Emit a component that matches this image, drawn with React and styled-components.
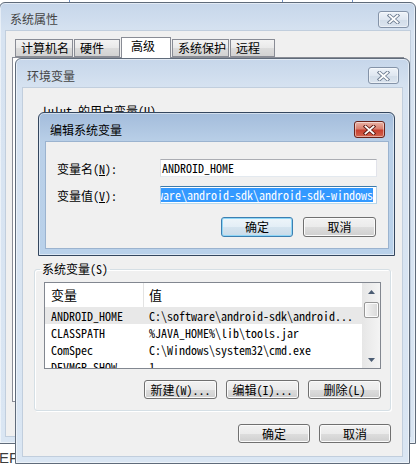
import React from "react";
import styled, { createGlobalStyle } from "styled-components";

const UI = `"Noto Sans Mono CJK SC", "Liberation Mono", "Noto Sans CJK SC", monospace`;
const TITLE = `"Noto Sans CJK SC", "Liberation Sans", sans-serif`;

const Global = createGlobalStyle`
  html, body { margin: 0; padding: 0; background: #fff; }
  body { font-family: ${UI}; font-size: 12px; color: #000; }
  * { box-sizing: border-box; }
`;

const Desktop = styled.div`
  position: relative;
  width: 418px;
  height: 465px;
  overflow: hidden;
  background: #fff;
`;

const BackStrip = styled.div`
  position: absolute;
  top: 0;
  left: 0;
  width: 418px;
  height: 3px;
`;

const Tick = styled.span`
  position: absolute;
  top: 0;
  left: ${(p) => p.$x}px;
  width: 1px;
  height: 3px;
  background: #6f8fc4;
`;

const Stray = styled.div`
  position: absolute;
  left: -1px;
  top: 449px;
  font: 15px "Liberation Sans", sans-serif;
  color: #3c3c3c;
`;

const Window = styled.div`
  position: absolute;
  left: ${(p) => p.$x}px;
  top: ${(p) => p.$y}px;
  width: ${(p) => p.$w}px;
  height: ${(p) => p.$h}px;
  display: flex;
  flex-direction: column;
  padding: 0 ${(p) => p.$pr ?? 7}px 7px ${(p) => p.$pl ?? 7}px;
  border: 1px solid ${(p) => (p.$active ? "#34465e" : "#5f6b7a")};
  border-radius: 6px 6px 0 0;
  background: ${(p) =>
    p.$active
      ? "linear-gradient(#a3bcdb, #bad0e8 30px, #b9d1ea)"
      : "linear-gradient(#c6d6ea, #d7e3f1 30px, #dae6f3)"};
  box-shadow: inset 0 0 0 1px rgba(255, 255, 255, 0.5);
`;

const TitleBar = styled.div`
  height: ${(p) => p.$h}px;
  flex-shrink: 0;
  display: flex;
  align-items: center;
  justify-content: space-between;
  padding-top: 4px;
`;

const Title = styled.span`
  font: 12px ${TITLE};
  line-height: 14px;
  margin-left: ${(p) => p.$indent}px;
  color: ${(p) => (p.$active ? "#000" : "#444")};
`;

const CloseBtn = styled.div`
  width: 31px;
  height: 17px;
  margin-right: ${(p) => p.$gap}px;
  display: flex;
  align-items: center;
  justify-content: center;
  border-radius: 3px;
  border: 1px solid ${(p) => (p.$active ? "#6a2219" : "#8493a8")};
  background: ${(p) =>
    p.$active
      ? "linear-gradient(#eab3a6, #d9806f 45%, #c8402f 55%, #d2654f)"
      : "linear-gradient(#eef3f9, #dfe7f1 50%, #d2dde9 51%, #dbe4ef)"};
  box-shadow: inset 0 0 0 1px rgba(255, 255, 255, 0.45);
`;

const Client = styled.div`
  flex: 1;
  min-height: 0;
  display: flex;
  flex-direction: column;
  background: #f0f0f0;
  box-shadow: 0 0 0 1px ${(p) => (p.$active ? "#9bb3cf" : "#c1cedd")};
`;

/* outer window: tabs */
const OuterPane = styled.div`
  flex: 1;
  display: flex;
  flex-direction: column;
  padding: 6px 6px 0;
`;

const TabRow = styled.div`
  height: 20px;
  display: flex;
  align-items: flex-end;
  gap: 1px;
  padding-left: 3px;
`;

const Tab = styled.div`
  width: ${(p) => p.$w}px;
  height: ${(p) => (p.$on ? 21 : 18)}px;
  margin-bottom: ${(p) => (p.$on ? -1 : 0)}px;
  position: relative;
  z-index: ${(p) => (p.$on ? 1 : 0)};
  border: 1px solid #898c95;
  border-bottom: ${(p) => (p.$on ? "none" : "1px solid #898c95")};
  padding: ${(p) => (p.$on ? "0 0 4px 9px" : "0 0 0 5px")};
  display: flex;
  align-items: center;
  line-height: 14px;
  background: ${(p) => (p.$on ? "#fff" : "linear-gradient(#f3f3f3, #e9e9e9 50%, #dcdcdc 51%, #d2d2d2)")};
`;

const TabPanel = styled.div`
  flex: 1;
  border: 1px solid #898c95;
  background: #fff;
`;

const OuterFooter = styled.div`
  height: 34px;
  display: flex;
  align-items: center;
  justify-content: flex-end;
  gap: 7px;
`;

/* generic controls */
const Button = styled.div`
  width: ${(p) => p.$w}px;
  height: ${(p) => p.$h ?? 19}px;
  display: flex;
  align-items: center;
  justify-content: center;
  line-height: 14px;
  white-space: nowrap;
  border-radius: 3px;
  border: 1px solid ${(p) => (p.$focus ? "#3c7fb1" : "#707070")};
  background: ${(p) =>
    p.$focus
      ? "linear-gradient(#eef5fa, #e3eef6 50%, #d5e4ef 51%, #c9dbe9)"
      : "linear-gradient(#f2f2f2, #ebebeb 50%, #dddddd 51%, #cfcfcf)"};
  box-shadow: inset 0 0 0 1px ${(p) => (p.$focus ? "#8fd6f6" : "#fbfbfb")};
`;

const Key = styled.u`
  text-decoration: underline;
`;

const ButtonRow = styled.div`
  display: flex;
  justify-content: flex-end;
  gap: ${(p) => p.$gap ?? 9}px;
  margin-top: ${(p) => p.$top ?? 0}px;
  padding-right: ${(p) => p.$right ?? 0}px;
`;

/* list view */
const List = styled.div`
  height: ${(p) => p.$h}px;
  border: 1px solid #828790;
  background: #fff;
  display: flex;
  overflow: hidden;
`;

const ListBody = styled.div`
  flex: 1;
  min-width: 0;
  display: flex;
  flex-direction: column;
`;

const Row = styled.div`
  display: grid;
  grid-template-columns: 99px 1fr;
  height: ${(p) => (p.$head ? 24 : 17)}px;
  flex-shrink: 0;
  align-items: center;
  white-space: nowrap;
  line-height: 14px;
  background: ${(p) => (p.$sel ? "#e8e8e8" : "transparent")};
`;

const Cell = styled.div`
  height: 100%;
  display: flex;
  align-items: center;
  padding-left: ${(p) => (p.$first ? 6 : 5)}px;
  border-right: ${(p) => (p.$divide ? "1px solid #e3e3e3" : "none")};
  overflow: hidden;
`;

const HeadText = styled.span`
  font-family: "Noto Sans CJK SC", sans-serif;
  font-size: 13px;
`;

const ScrollTrack = styled.div`
  width: 18px;
  flex-shrink: 0;
  display: flex;
  flex-direction: column;
  align-items: center;
  background: linear-gradient(90deg, #e6e6e6, #f4f4f4);
`;

const Arrow = styled.div`
  height: 17px;
  width: 17px;
  display: flex;
  align-items: center;
  justify-content: center;
`;

const Thumb = styled.div`
  width: 15px;
  height: 16px;
  margin-top: 2px;
  border: 1px solid #979797;
  border-radius: 2px;
  background: linear-gradient(90deg, #f5f5f5, #e6e6e6 50%, #d9d9d9);
  box-shadow: inset 0 0 0 1px #fcfcfc;
`;

const TrackFill = styled.div`
  flex: 1;
`;

/* environment window body */
const EnvBody = styled.div`
  flex: 1;
  display: flex;
  flex-direction: column;
`;

const UserSection = styled.div`
  height: 174px;
  padding: 16px 0 0 19px;
  display: flex;
  flex-direction: column;
`;

const SectionLabel = styled.div`
  line-height: 14px;
`;

const UserInner = styled.div`
  margin: 5px 10px 0 2px;
`;

const Group = styled.fieldset`
  margin: 0 11px 0 11px;
  padding: 6px 9px 11px;
  border: 1px solid #d5dfe5;
  border-radius: 3px;
  box-shadow: inset 1px 1px 0 #fff, 1px 1px 0 #fff;
  min-width: 0;
`;

const Legend = styled.legend`
  padding: 0 2px;
  margin-left: -4px;
  line-height: 14px;
`;

/* edit dialog */
const EditBody = styled.div`
  flex: 1;
  padding: 17px 10px 0 11px;
  display: flex;
  flex-direction: column;
`;

const FormGrid = styled.div`
  display: grid;
  grid-template-columns: 103px 217px;
  grid-auto-rows: 18px;
  row-gap: 9px;
  align-items: center;
`;

const Field = styled.div`
  height: 18px;
  border: 1px solid;
  border-color: ${(p) => (p.$focus ? "#3d7bad #b5cfe7 #b7d9ed #b5cfe7" : "#abadb3 #e2e3ea #e3e9ef #dbdfe6")};
  background: #fff;
  display: flex;
  align-items: center;
  justify-content: ${(p) => (p.$focus ? "flex-end" : "flex-start")};
  padding: ${(p) => (p.$focus ? "0 3px 0 0" : "0 1px")};
  overflow: hidden;
  white-space: nowrap;
  line-height: 14px;
`;

const Selection = styled.span`
  flex-shrink: 0;
  background: #3399ff;
  color: #fff;
  height: 14px;
  display: flex;
  align-items: center;
`;

function XGlyph({ active }) {
  const edge = active ? "#5e1a12" : "#6f7e92";
  return (
    <svg width="13" height="10" viewBox="0 0 13 10">
      <path d="M2.5 1.5 L10.5 8.5 M10.5 1.5 L2.5 8.5" stroke={edge} strokeWidth="3.6" strokeLinecap="square" />
      <path d="M2.5 1.5 L10.5 8.5 M10.5 1.5 L2.5 8.5" stroke="#fff" strokeWidth="1.8" strokeLinecap="square" />
    </svg>
  );
}

function ScrollArrow({ up }) {
  return (
    <Arrow>
      <svg width="7" height="4" viewBox="0 0 7 4">
        <path d={up ? "M0 4 L3.5 0 L7 4 Z" : "M0 0 L3.5 4 L7 0 Z"} fill="#4b5c73" />
      </svg>
    </Arrow>
  );
}

function ListView({ height, rows, selected }) {
  return (
    <List $h={height}>
      <ListBody>
        <Row $head>
          <Cell $first $divide><HeadText>变量</HeadText></Cell>
          <Cell><HeadText>值</HeadText></Cell>
        </Row>
        {rows.map(([k, v], i) => (
          <Row key={k} $sel={i === selected}>
            <Cell $first>{k}</Cell>
            <Cell>{v}</Cell>
          </Row>
        ))}
      </ListBody>
      <ScrollTrack>
        <ScrollArrow up />
        <Thumb />
        <TrackFill />
        <ScrollArrow />
      </ScrollTrack>
    </List>
  );
}

const systemVars = [
  ["ANDROID_HOME", "C:\\software\\android-sdk\\android..."],
  ["CLASSPATH", "%JAVA_HOME%\\lib\\tools.jar"],
  ["ComSpec", "C:\\Windows\\system32\\cmd.exe"],
  ["DEVMGR_SHOW", "1"],
  ["FP_NO_HOST_CHECK", "NO"],
];

const userVars = [
  ["PATH", "C:\\Users\\lulut\\bin"],
  ["TEMP", "%USERPROFILE%\\AppData\\Local\\Temp"],
  ["TMP", "%USERPROFILE%\\AppData\\Local\\Temp"],
];

const tabs = [
  ["计算机名", 58],
  ["硬件", 46],
  ["高级", 50],
  ["系统保护", 57],
  ["远程", 45],
];

export default function App() {
  return (
    <>
      <Global />
      <Desktop>
        <BackStrip>
          <Tick $x={69} />
          <Tick $x={282} />
          <Tick $x={352} />
        </BackStrip>
        <Stray>EF</Stray>

        <Window $x={-1} $y={2} $w={417} $h={442} $pl={6} $pr={5}>
          <TitleBar $h={28}>
            <Title $indent={4}>系统属性</Title>
            <CloseBtn $gap={1}><XGlyph /></CloseBtn>
          </TitleBar>
          <Client>
            <OuterPane>
              <TabRow>
                {tabs.map(([t, w]) => (
                  <Tab key={t} $w={w} $on={t === "高级"}>{t}</Tab>
                ))}
              </TabRow>
              <TabPanel />
              <OuterFooter>
                <Button $w={72}>确定</Button>
                <Button $w={72}>取消</Button>
                <Button $w={72}>应用(A)</Button>
              </OuterFooter>
            </OuterPane>
          </Client>
        </Window>

        <Window $x={15} $y={58} $w={395} $h={406}>
          <TitleBar $h={29}>
            <Title $indent={4}>环境变量</Title>
            <CloseBtn $gap={3}><XGlyph /></CloseBtn>
          </TitleBar>
          <Client>
            <EnvBody>
              <UserSection>
                <SectionLabel>lulut 的用户变量(U)</SectionLabel>
                <UserInner>
                  <ListView height={90} rows={userVars} selected={-1} />
                  <ButtonRow $top={6}>
                    <Button $w={73}>新建(N)...</Button>
                    <Button $w={73}>编辑(E)...</Button>
                    <Button $w={73}>删除(D)</Button>
                  </ButtonRow>
                </UserInner>
              </UserSection>

              <Group>
                <Legend>系统变量(S)</Legend>
                <ListView height={87} rows={systemVars} selected={0} />
                <ButtonRow $top={11}>
                  <Button $w={73}>新建(W)...</Button>
                  <Button $w={73}>编辑(I)...</Button>
                  <Button $w={73}>删除(L)</Button>
                </ButtonRow>
              </Group>

              <ButtonRow $top={13} $right={11}>
                <Button $w={72}>确定</Button>
                <Button $w={72}>取消</Button>
              </ButtonRow>
            </EnvBody>
          </Client>
        </Window>

        <Window $x={38} $y={112} $w={357} $h={144} $pr={6} $active>
          <TitleBar $h={29}>
            <Title $indent={4} $active>编辑系统变量</Title>
            <CloseBtn $gap={3} $active><XGlyph active /></CloseBtn>
          </TitleBar>
          <Client $active>
            <EditBody>
              <FormGrid>
                <span>变量名(<Key>N</Key>):</span>
                <Field>ANDROID_HOME</Field>
                <span>变量值(<Key>V</Key>):</span>
                <Field $focus>
                  <Selection>C:\software\android-sdk\android-sdk-windows</Selection>
                </Field>
              </FormGrid>
              <ButtonRow $top={13} $right={2} $gap={10}>
                <Button $w={72} $h={20} $focus>确定</Button>
                <Button $w={73} $h={20}>取消</Button>
              </ButtonRow>
            </EditBody>
          </Client>
        </Window>
      </Desktop>
    </>
  );
}
